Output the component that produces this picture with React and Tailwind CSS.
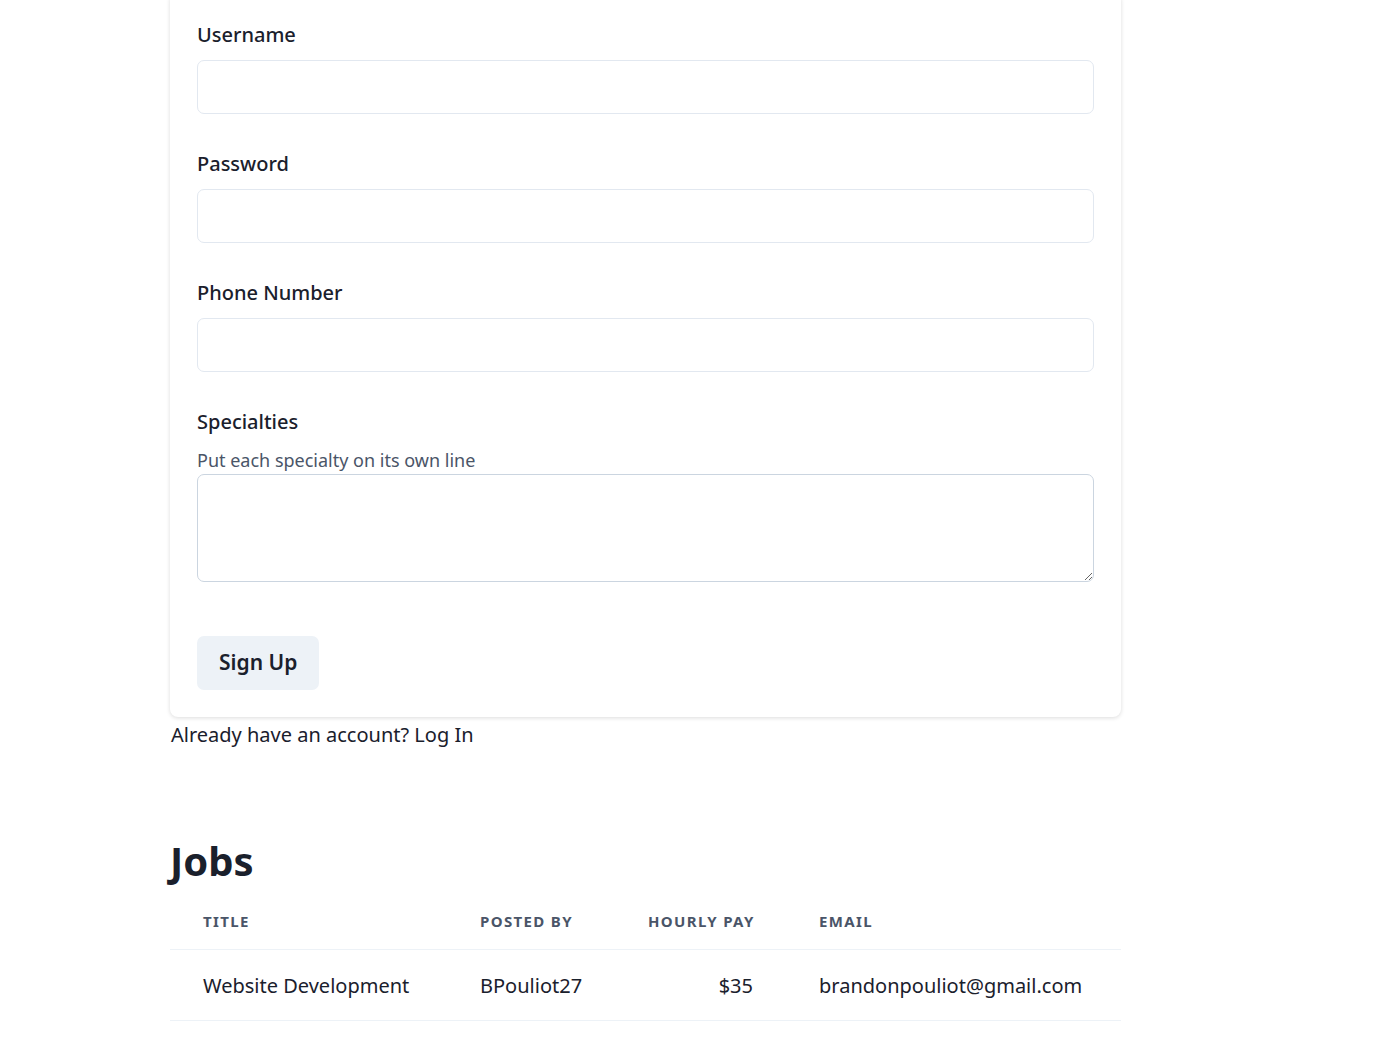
import React from "react";

const FIELDS = [
  { label: "Username", type: "text" },
  { label: "Password", type: "password" },
  { label: "Phone Number", type: "tel" },
];

const JOBS = [
  {
    title: "Website Development",
    postedBy: "BPouliot27",
    pay: "$35",
    email: "brandonpouliot@gmail.com",
  },
];

const App = () => {
  return (
    <div
      className="min-h-screen bg-white text-[#1a202c] overflow-hidden"
      style={{ fontFamily: '"Noto Sans", "Open Sans", sans-serif' }}
    >
      <div className="ml-[170px] w-[951px] -mt-[7px]">
        {/* Sign up card */}
        <form className="bg-white rounded-lg shadow-[0_1px_4px_rgba(0,0,0,0.14)] px-[27px] pt-[27px] pb-[27px]">
          <div className="flex flex-col gap-[35px]">
            {FIELDS.map((f) => (
              <div key={f.label}>
                <label className="block text-[20px] leading-[30px] font-medium mb-[10px]">
                  {f.label}
                </label>
                <input
                  type={f.type}
                  className="block w-full h-[54px] rounded-[7px] border border-[#e2e8f0] px-4 text-[20px] outline-none"
                />
              </div>
            ))}
            <div>
              <label className="block text-[20px] leading-[30px] font-medium mb-[10px]">
                Specialties
              </label>
              <p className="text-[18px] leading-[27px] text-[#4a5568]">
                Put each specialty on its own line
              </p>
              <textarea className="block w-full h-[108px] rounded-[7px] border border-[#cbd5e0] px-4 py-2 text-[20px] outline-none" />
            </div>
          </div>
          <button
            type="button"
            className="mt-[54px] h-[54px] px-[22px] rounded-[7px] bg-[#edf2f7] text-[21px] font-semibold"
          >
            Sign Up
          </button>
        </form>
        <p className="mt-[3px] ml-[1px] text-[20px] leading-[30px]">
          Already have an account? Log In
        </p>

        {/* Jobs */}
        <h2 className="mt-[87px] mb-[9px] text-[40px] leading-[48px] font-bold">
          Jobs
        </h2>
        <table className="w-full table-fixed border-collapse">
          <thead>
            <tr className="border-b border-[#edf2f7]">
              <th className="w-[277px] px-[33px] pt-[20px] pb-[21px] text-left text-[15px] leading-[14px] font-bold tracking-[0.09em] uppercase text-[#4a5568]">
                Title
              </th>
              <th className="w-[168px] px-[33px] pt-[20px] pb-[21px] text-left text-[15px] leading-[14px] font-bold tracking-[0.09em] uppercase text-[#4a5568] whitespace-nowrap">
                Posted By
              </th>
              <th className="w-[171px] px-[33px] pt-[20px] pb-[21px] text-right text-[15px] leading-[14px] font-bold tracking-[0.09em] uppercase text-[#4a5568] whitespace-nowrap">
                Hourly Pay
              </th>
              <th className="px-[33px] pt-[20px] pb-[21px] text-left text-[15px] leading-[14px] font-bold tracking-[0.09em] uppercase text-[#4a5568]">
                Email
              </th>
            </tr>
          </thead>
          <tbody>
            {JOBS.map((job) => (
              <tr key={job.title} className="border-b border-[#edf2f7]">
                <td className="px-[33px] pt-[21px] pb-[19px] text-[20px] leading-[30px] whitespace-nowrap">
                  {job.title}
                </td>
                <td className="px-[33px] pt-[21px] pb-[19px] text-[20px] leading-[30px]">
                  {job.postedBy}
                </td>
                <td className="px-[33px] pt-[21px] pb-[19px] text-[20px] leading-[30px] text-right">
                  {job.pay}
                </td>
                <td className="px-[33px] pt-[21px] pb-[19px] text-[20px] leading-[30px] whitespace-nowrap">
                  {job.email}
                </td>
              </tr>
            ))}
          </tbody>
        </table>
      </div>
    </div>
  );
};

export default App;
